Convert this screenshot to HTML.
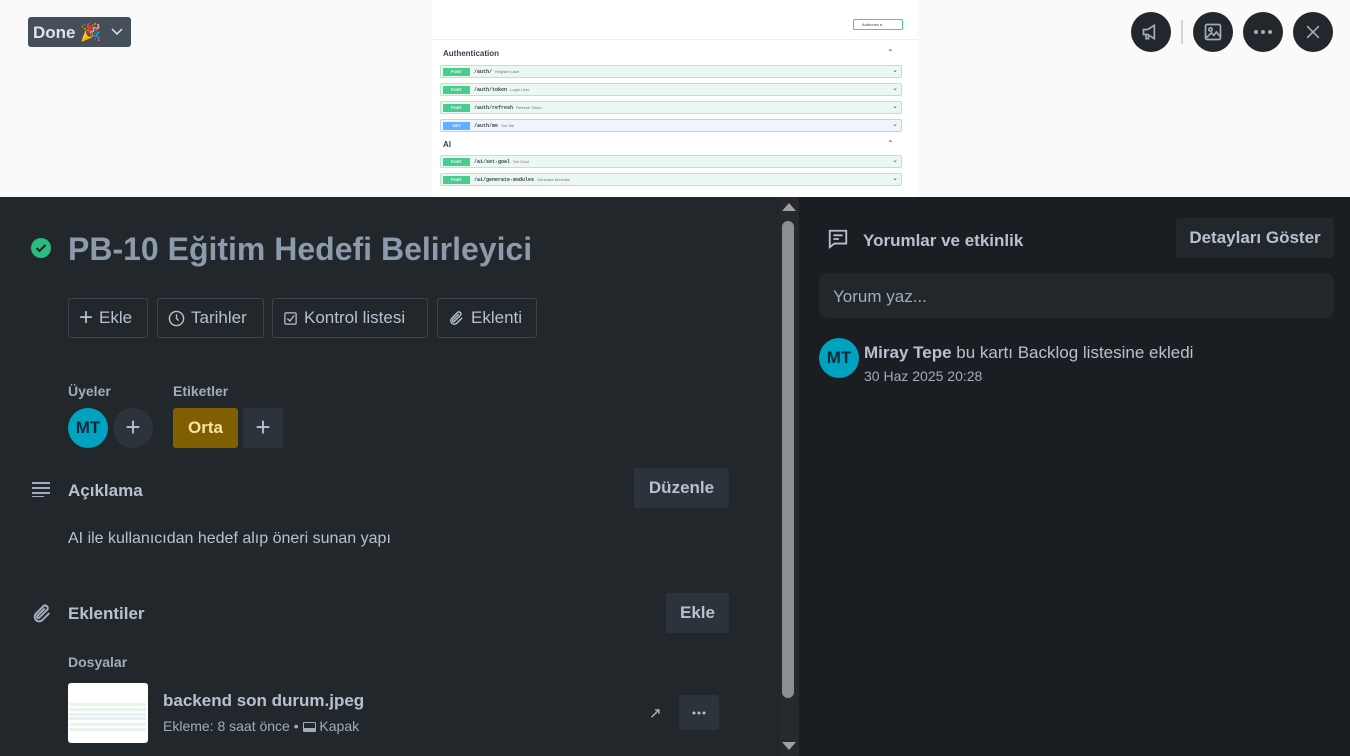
<!DOCTYPE html>
<html><head><meta charset="utf-8"><style>
*{box-sizing:border-box;margin:0;padding:0}
body{width:1350px;height:756px;overflow:hidden;background:#22272b;font-family:"Liberation Sans",sans-serif;color:#b6c2cf;position:relative}
.abs{position:absolute}
.top{left:0;top:0;width:1350px;height:197px;background:#fafafa}
.shot{left:432px;top:0;width:486px;height:197px;background:#fff}
.row{position:absolute;left:8px;width:462px;height:13px;border:1px solid #b5e6cf;background:#ebf7f1;border-radius:2px}
.row .m{position:absolute;left:2px;top:2px;width:27px;height:8px;background:#49cc90;color:#fff;font-size:4px;text-align:center;line-height:8px;font-weight:bold}
.row .p{position:absolute;left:33px;top:2px;font-size:5px;font-family:"Liberation Mono",monospace;font-weight:bold;color:#3b4151;line-height:8px}
.row .d{font-family:"Liberation Sans";font-weight:normal;color:#777;font-size:4px;margin-left:3px}
.row .c{position:absolute;right:3px;top:0px;font-size:7px;color:#555}
.cbtn{width:40px;height:40px;border-radius:50%;background:#22272b;top:12px;display:flex;align-items:center;justify-content:center}
.btn{position:absolute;top:298px;height:40px;border:1px solid #3d444b;border-radius:3px;display:flex;align-items:center;padding:0 10px;font-size:17px;color:#b6c2cf;gap:6px}
.gbtn{position:absolute;background:#2c333a;border-radius:3px;font-size:17px;font-weight:bold;color:#b6c2cf;display:flex;align-items:center;justify-content:center}
.h{position:absolute;font-size:17px;font-weight:bold;color:#b6c2cf}
.lbl{position:absolute;font-size:14px;font-weight:bold;color:#9fadbc}
.right{left:799px;top:197px;width:551px;height:559px;background:#1a1d21}
</style></head><body>
<div class="abs top"></div>
<div class="abs shot">
 <div class="abs" style="left:0;top:0;width:486px;height:40px;border-bottom:1px solid #eee"></div>
 <div class="abs" style="left:421px;top:19px;width:50px;height:11px;border:1px solid #49cc90;border-radius:2px;font-size:4px;color:#3b4151;line-height:9px;padding-left:8px">Authorize <span style="color:#49cc90">■</span></div>
 <div class="abs" style="left:11px;top:49px;font-size:8px;font-weight:bold;color:#3b4151">Authentication</div>
 <div class="abs" style="left:455px;top:48px;font-size:8px;color:#555">⌃</div>
 <div class="row" style="top:65px"><div class="m">POST</div><div class="p">/auth/<span class="d">Register User</span></div><div class="c">⌄</div></div>
 <div class="row" style="top:83px"><div class="m">POST</div><div class="p">/auth/token<span class="d">Login User</span></div><div class="c">⌄</div></div>
 <div class="row" style="top:101px"><div class="m">POST</div><div class="p">/auth/refresh<span class="d">Refresh Token</span></div><div class="c">⌄</div></div>
 <div class="row" style="top:119px;border-color:#b7d6f6;background:#eef5fc"><div class="m" style="background:#61affe">GET</div><div class="p">/auth/me<span class="d">Get Me</span></div><div class="c">⌄</div></div>
 <div class="abs" style="left:11px;top:140px;font-size:8px;font-weight:bold;color:#3b4151">AI</div>
 <div class="abs" style="left:455px;top:139px;font-size:8px;color:#555">⌃</div>
 <div class="row" style="top:155px"><div class="m">POST</div><div class="p">/ai/set-goal<span class="d">Set Goal</span></div><div class="c">⌄</div></div>
 <div class="row" style="top:173px"><div class="m">POST</div><div class="p">/ai/generate-modules<span class="d">Generate Modules</span></div><div class="c">⌄</div></div>
</div>
<div class="abs" style="left:28px;top:17px;width:103px;height:30px;background:#454f59;border-radius:3px;color:#dee4ea;font-size:17px;font-weight:bold;line-height:32px;padding-left:5px">Done 🎉<svg class="abs" style="left:83px;top:11px" width="12" height="8"><path d="M1 1l5 5 5-5" stroke="#dee4ea" stroke-width="1.5" fill="none"/></svg></div>
<div class="abs cbtn" style="left:1131px"><svg width="20" height="20" viewBox="0 0 24 24" fill="none" stroke="#9fadbc" stroke-width="2"><path d="M3 9h5l8-5v16l-8-5H3z M6 15v5h3v-5"/></svg></div>
<div class="abs" style="left:1181px;top:20px;width:2px;height:24px;background:#d0d4d9"></div>
<div class="abs cbtn" style="left:1193px"><svg width="20" height="20" viewBox="0 0 24 24" fill="none" stroke="#9fadbc" stroke-width="2"><rect x="3" y="3" width="18" height="18" rx="2"/><circle cx="9" cy="9" r="2"/><path d="M4 19l6-6 3 3 3-4 5 6"/></svg></div>
<div class="abs cbtn" style="left:1243px"><svg width="20" height="6"><circle cx="3" cy="3" r="2" fill="#9fadbc"/><circle cx="10" cy="3" r="2" fill="#9fadbc"/><circle cx="17" cy="3" r="2" fill="#9fadbc"/></svg></div>
<div class="abs cbtn" style="left:1293px"><svg width="20" height="20" viewBox="0 0 24 24" stroke="#9fadbc" stroke-width="2"><path d="M5 5l14 14M19 5L5 19"/></svg></div>

<svg class="abs" style="left:30px;top:237px" width="22" height="22"><circle cx="11" cy="11" r="10" fill="#2abb7f"/><path d="M6.5 11l3 3 6-6" stroke="#1d2125" stroke-width="2" fill="none"/></svg>
<div class="abs" style="left:68px;top:231px;font-size:32px;color:#8c9bab;font-weight:bold">PB-10 Eğitim Hedefi Belirleyici</div>

<div class="btn" style="left:68px;width:80px"><span style="font-size:24px;font-weight:300">+</span>Ekle</div>
<div class="btn" style="left:157px;width:107px"><svg width="17" height="17" viewBox="0 0 24 24" fill="none" stroke="#b6c2cf" stroke-width="2"><circle cx="12" cy="12" r="10"/><path d="M12 6v6l3 3"/></svg>Tarihler</div>
<div class="btn" style="left:272px;width:156px"><svg width="15" height="15" viewBox="0 0 24 24" fill="none" stroke="#b6c2cf" stroke-width="2"><rect x="3" y="3" width="18" height="18" rx="2"/><path d="M7 12l4 4 7-9"/></svg>Kontrol listesi</div>
<div class="btn" style="left:437px;width:100px"><svg width="17" height="17" viewBox="0 0 24 24" fill="none" stroke="#b6c2cf" stroke-width="2"><path d="M20 11l-8 8a5 5 0 0 1-7-7l9-9a3 3 0 0 1 4 4l-9 9a1 1 0 0 1-2-2l8-8"/></svg>Eklenti</div>

<div class="lbl" style="left:68px;top:383px">Üyeler</div>
<div class="lbl" style="left:173px;top:383px">Etiketler</div>
<div class="abs" style="left:68px;top:408px;width:40px;height:40px;border-radius:50%;background:#00a3bf;color:#0c2a3c;font-size:17px;font-weight:bold;text-align:center;line-height:40px">MT</div>
<div class="abs" style="left:113px;top:408px;width:40px;height:40px;border-radius:50%;background:#2c333a;color:#b6c2cf;font-size:26px;text-align:center;line-height:38px">+</div>
<div class="abs" style="left:173px;top:408px;width:65px;height:40px;border-radius:3px;background:#7f5f01;color:#f8e6a0;font-size:17px;font-weight:bold;text-align:center;line-height:40px">Orta</div>
<div class="abs" style="left:243px;top:408px;width:40px;height:40px;border-radius:3px;background:#2c333a;color:#b6c2cf;font-size:26px;text-align:center;line-height:38px">+</div>

<svg class="abs" style="left:31px;top:481px" width="20" height="16"><path d="M1 2h18M1 7h18M1 12h18M1 16h12" stroke="#9fadbc" stroke-width="2"/></svg>
<div class="h" style="left:68px;top:481px">Açıklama</div>
<div class="gbtn" style="left:634px;top:468px;width:95px;height:40px">Düzenle</div>
<div class="abs" style="left:68px;top:530px;font-size:16px;color:#b6c2cf">AI ile kullanıcıdan hedef alıp öneri sunan yapı</div>

<svg class="abs" style="left:31px;top:603px" width="22" height="22" viewBox="0 0 24 24" fill="none" stroke="#9fadbc" stroke-width="2.2"><path d="M20 11l-8 8a5 5 0 0 1-7-7l9-9a3 3 0 0 1 4 4l-9 9a1 1 0 0 1-2-2l8-8"/></svg>
<div class="h" style="left:68px;top:604px">Eklentiler</div>
<div class="gbtn" style="left:666px;top:593px;width:63px;height:40px">Ekle</div>
<div class="lbl" style="left:68px;top:654px">Dosyalar</div>
<div class="abs" style="left:68px;top:683px;width:80px;height:60px;border-radius:3px;background:#fff;overflow:hidden">
 <div class="abs" style="left:1px;top:20px;width:77px;height:3px;background:#e5f5ec"></div>
 <div class="abs" style="left:1px;top:25px;width:77px;height:3px;background:#e5f5ec"></div>
 <div class="abs" style="left:1px;top:30px;width:77px;height:3px;background:#e5f5ec"></div>
 <div class="abs" style="left:1px;top:34px;width:77px;height:3px;background:#e6f0fb"></div>
 <div class="abs" style="left:1px;top:40px;width:77px;height:3px;background:#e5f5ec"></div>
 <div class="abs" style="left:1px;top:45px;width:77px;height:3px;background:#e5f5ec"></div>
</div>
<div class="abs" style="left:163px;top:691px;font-size:17px;font-weight:bold;color:#b6c2cf">backend son durum.jpeg</div>
<div class="abs" style="left:163px;top:718px;font-size:14px;color:#9fadbc">Ekleme: 8 saat önce • <span style="display:inline-block;width:13px;height:10px;border:1.5px solid #9fadbc;border-bottom-width:4px;border-radius:1px;vertical-align:-1px"></span> Kapak</div>
<div class="abs" style="left:649px;top:704px;font-size:15px;color:#b6c2cf">↗</div>
<div class="gbtn" style="left:679px;top:695px;width:40px;height:35px"><svg width="14" height="4"><circle cx="2" cy="2" r="1.5" fill="#b6c2cf"/><circle cx="7" cy="2" r="1.5" fill="#b6c2cf"/><circle cx="12" cy="2" r="1.5" fill="#b6c2cf"/></svg></div>

<div class="abs" style="left:780px;top:197px;width:19px;height:559px;background:#26292d"></div>
<div class="abs" style="left:782px;top:221px;width:12px;height:477px;border-radius:6px;background:#8b8f93"></div>
<div class="abs" style="left:782px;top:203px;width:0;height:0;border-left:7px solid transparent;border-right:7px solid transparent;border-bottom:8px solid #a0a0a0"></div>
<div class="abs" style="left:782px;top:742px;width:0;height:0;border-left:7px solid transparent;border-right:7px solid transparent;border-top:8px solid #a0a0a0"></div>

<div class="abs right"></div>
<svg class="abs" style="left:827px;top:228px" width="22" height="22" viewBox="0 0 24 24" fill="none" stroke="#b6c2cf" stroke-width="2"><path d="M3 3h18v14H8l-5 4z M7 8h10M7 12h6"/></svg>
<div class="h" style="left:863px;top:231px;color:#b6c2cf">Yorumlar ve etkinlik</div>
<div class="gbtn" style="left:1176px;top:218px;width:158px;height:40px;background:#22272b">Detayları Göster</div>
<div class="abs" style="left:819px;top:273px;width:515px;height:45px;border-radius:8px;background:#22272b;font-size:17px;color:#9fadbc;line-height:47px;padding-left:14px">Yorum yaz...</div>
<div class="abs" style="left:819px;top:338px;width:40px;height:40px;border-radius:50%;background:#00a3bf;color:#0c2a3c;font-size:17px;font-weight:bold;text-align:center;line-height:40px">MT</div>
<div class="abs" style="left:864px;top:343px;font-size:17px;color:#b6c2cf"><b>Miray Tepe</b> bu kartı Backlog listesine ekledi</div>
<div class="abs" style="left:864px;top:368px;font-size:14px;color:#9fadbc">30 Haz 2025 20:28</div>
</body></html>
